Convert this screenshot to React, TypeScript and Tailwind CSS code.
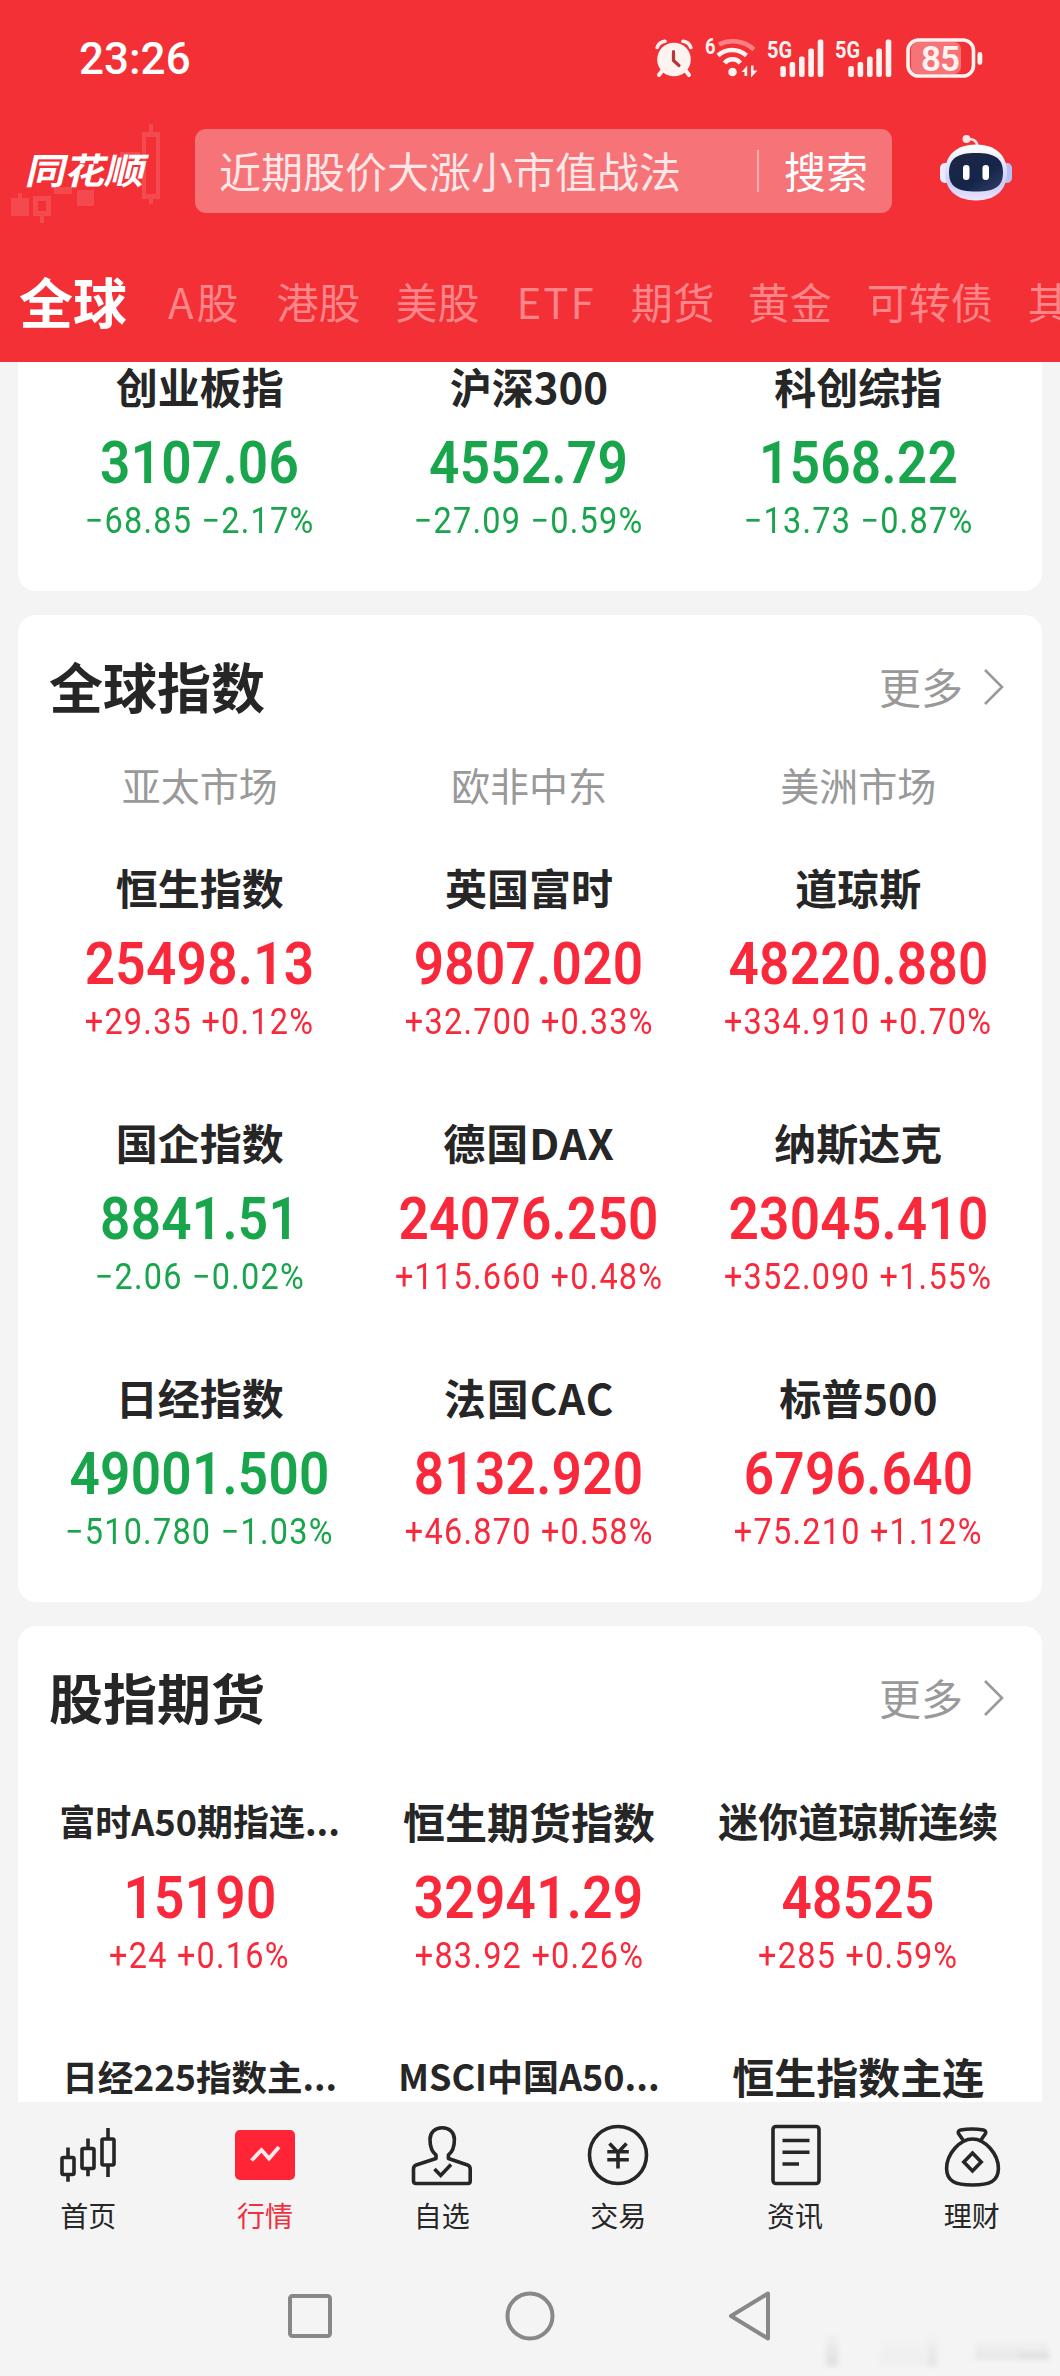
import React from 'react'

type Quote = {
  name: string
  value?: string
  change?: string
  percent?: string
  up?: boolean
  nameClass?: string
}

const cnIndexes: Quote[] = [
  { name: '创业板指', value: '3107.06', change: '−68.85', percent: '−2.17%' },
  { name: '沪深300', value: '4552.79', change: '−27.09', percent: '−0.59%' },
  { name: '科创综指', value: '1568.22', change: '−13.73', percent: '−0.87%' },
]

const globalIndexes: Quote[] = [
  { name: '恒生指数', value: '25498.13', change: '+29.35', percent: '+0.12%', up: true },
  { name: '英国富时', value: '9807.020', change: '+32.700', percent: '+0.33%', up: true },
  { name: '道琼斯', value: '48220.880', change: '+334.910', percent: '+0.70%', up: true },
  { name: '国企指数', value: '8841.51', change: '−2.06', percent: '−0.02%' },
  { name: '德国DAX', value: '24076.250', change: '+115.660', percent: '+0.48%', up: true, nameClass: 'text-[42px] tracking-[1px]' },
  { name: '纳斯达克', value: '23045.410', change: '+352.090', percent: '+1.55%', up: true },
  { name: '日经指数', value: '49001.500', change: '−510.780', percent: '−1.03%' },
  { name: '法国CAC', value: '8132.920', change: '+46.870', percent: '+0.58%', up: true, nameClass: 'text-[42px] tracking-[1px]' },
  { name: '标普500', value: '6796.640', change: '+75.210', percent: '+1.12%', up: true },
]

const futures: Quote[] = [
  { name: '富时A50期指连...', value: '15190', change: '+24', percent: '+0.16%', up: true, nameClass: 'text-[36px]' },
  { name: '恒生期货指数', value: '32941.29', change: '+83.92', percent: '+0.26%', up: true },
  { name: '迷你道琼斯连续', value: '48525', change: '+285', percent: '+0.59%', up: true, nameClass: 'text-[40px]' },
  { name: '日经225指数主...', nameClass: 'text-[35.5px]' },
  { name: 'MSCI中国A50...', nameClass: 'text-[36px]' },
  { name: '恒生指数主连' },
]

const regions = ['亚太市场', '欧非中东', '美洲市场']

const tabs = [
  { label: 'A股', className: 'tracking-[3px]' },
  { label: '港股' },
  { label: '美股' },
  { label: 'ETF', className: 'pl-0.5 tracking-[2px]' },
  { label: '期货' },
  { label: '黄金', className: '-ml-0.5' },
  { label: '可转债' },
  { label: '其' },
]

function AlarmIcon() {
  return (
    <svg width="38" height="38" viewBox="0 0 38 38" fill="none" className="shrink-0">
      <circle cx="19" cy="20.5" r="16.8" fill="#fff3f1" />
      <path d="M2.2 8.5Q4 3 10 2.3M35.800 8.500Q34 3 28 2.300" stroke="#fff3f1" strokeWidth="3.600" strokeLinecap="round" />
      <path d="M7 32l-3 4M31 32l3 4" stroke="#fff3f1" strokeWidth="4" strokeLinecap="round" />
      <path d="M18.500 12.500v9l5.500 5" stroke="#b6393a" strokeWidth="3.200" strokeLinecap="round" />
    </svg>
  )
}

function WifiIcon() {
  return (
    <svg width="52" height="40" viewBox="0 0 52 40" fill="none" className="shrink-0 overflow-visible font-['Roboto',sans-serif]">
      <text x="0" y="16" fill="#fff3f1" fontSize="22" fontWeight="700" textLength="10.500" lengthAdjust="spacingAndGlyphs">6</text>
      <path d="M14 6.500C25 1 39 2.500 49 11.500" stroke="#ff8084" strokeWidth="4.500" />
      <path d="M13 17.500C21 10 33 10 41.500 17.500" stroke="#fff3f1" strokeWidth="4.500" />
      <path d="M19.500 25C24 20 31 20 35.500 25" stroke="#fff3f1" strokeWidth="4.500" />
      <circle cx="27.500" cy="34" r="4.300" fill="#fff3f1" />
      <path d="M36.500 34l5.700-6.500v10.500h-2.700v-4zM52.500 32.500l-6.500 7V27.500h2.500v5z" fill="#fff3f1" />
    </svg>
  )
}

function SignalIcon() {
  return (
    <svg width="57" height="40" viewBox="0 0 57 40" className="shrink-0 overflow-visible font-['Roboto',sans-serif]">
      <text x="0" y="19.500" fill="#fff3f1" fontSize="24.500" fontWeight="700" textLength="25" lengthAdjust="spacingAndGlyphs">5G</text>
      <g fill="#fff3f1">
        <rect x="13.300" y="28" width="5.600" height="11" rx="2" />
        <rect x="22.600" y="24" width="5.600" height="15" rx="2" />
        <rect x="32" y="18.500" width="5.600" height="20.500" rx="2" />
        <rect x="41.300" y="10.500" width="5.600" height="28.500" rx="2" />
        <rect x="50.700" y="1.500" width="5.600" height="37.500" rx="2" />
      </g>
    </svg>
  )
}

function BatteryIcon() {
  return (
    <svg width="77" height="40" viewBox="0 0 77 40" fill="none" className="shrink-0 overflow-visible font-['Roboto',sans-serif]">
      <rect x="5" y="4" width="50" height="32" rx="7" fill="#f67478" />
      <rect x="2" y="2" width="65.500" height="36" rx="10.500" stroke="#fff3f1" strokeWidth="3.600" />
      <rect x="71.500" y="14" width="4.800" height="13" rx="2.400" fill="#fff3f1" />
      <text x="15" y="32.500" fill="#fff3f1" fontSize="35" fontWeight="600" textLength="39">85</text>
    </svg>
  )
}

function Logo() {
  return (
    <div className="relative h-[104px] w-[195px] shrink-0">
      <svg width="166" height="104" viewBox="0 0 166 104" fill="none" className="absolute top-[3px] left-0">
        <g fill="#f4494e">
          <path d="M11 76h7v-5h4v5h7v18H11zM77 68h17v16H77zM54 65h18v7H54zM120 30h20v8h-20z" />
          <path d="M33 74h18v20h-7v7h-4v-7h-7zm5 5v10h8V79z" fillRule="evenodd" />
          <path d="M142 10h7V2h4v8h7v67h-7v5h-4v-5h-7zm4 5v57h10V15z" fillRule="evenodd" />
        </g>
      </svg>
      <span className="absolute top-5 left-[28px] -skew-x-12 scale-y-90 text-[40px] leading-[60px] font-bold tracking-[-0.5px] whitespace-nowrap text-white">同花顺</span>
    </div>
  )
}

function Robot() {
  return (
    <svg width="76" height="72" viewBox="0 0 76 72" fill="none" className="shrink-0">
      <defs>
        <linearGradient id="shell" x1="0" y1="0" x2="0" y2="1">
          <stop offset="0" stopColor="#fff" />
          <stop offset="0.7" stopColor="#c9cdf8" />
          <stop offset="1" stopColor="#ece5fa" />
        </linearGradient>
        <linearGradient id="visor" x1="0" y1="0" x2="1" y2="1">
          <stop offset="0" stopColor="#1c2743" />
          <stop offset="0.6" stopColor="#15254a" />
          <stop offset="1" stopColor="#33406a" />
        </linearGradient>
      </defs>
      <path d="M29 7.500c6-1 10 1 10.500 7" stroke="#ffdfe2" strokeWidth="2.600" />
      <circle cx="28.500" cy="7" r="4" fill="#ffe3e6" />
      <rect x="2" y="31" width="10" height="20" rx="5" fill="#eceaff" />
      <rect x="64" y="31" width="10" height="20" rx="5" fill="#b9bff2" />
      <path d="M38 12.500c20 0 31 11 31 28S58 68.500 38 68.500 7 57.500 7 40.500 18 12.500 38 12.500z" fill="url(#shell)" />
      <path d="M38 21c19 0 27 5.500 27 19.500S57 59.500 38 59.500 11 54.500 11 40.500 19 21 38 21z" fill="url(#visor)" />
      <rect x="25" y="33" width="6.500" height="15" rx="3.200" fill="#fff" />
      <rect x="44.500" y="33" width="6.500" height="15" rx="3.200" fill="#fff" />
    </svg>
  )
}

function Chevron() {
  return (
    <svg width="22" height="38" viewBox="0 0 22 38" fill="none">
      <path d="M2 2l17 17L2 36" stroke="#999" strokeWidth="2.600" />
    </svg>
  )
}

function QuoteCell({ quote }: { quote: Quote }) {
  return (
    <div className={quote.up ? 'flex flex-col items-center text-[#f9283a]' : 'flex flex-col items-center text-[#18a54b]'}>
      <div className={`${quote.nameClass ?? 'text-[42px]'} h-[50px] leading-[47px] font-bold whitespace-nowrap text-[#262626]`}>{quote.name}</div>
      {quote.value ? (
        <>
          <div className="mt-[21px] h-[60px] scale-x-90 font-['Roboto',sans-serif] text-[59px] leading-[60px] font-semibold tracking-[0.3px] whitespace-nowrap">{quote.value}</div>
          <div className="mt-2 h-[39px] scale-x-90 font-['Roboto',sans-serif] text-[36px] leading-10 tracking-[1.4px] whitespace-nowrap">
            {quote.change} {quote.percent}
          </div>
        </>
      ) : null}
    </div>
  )
}

function SectionTitle({ title }: { title: string }) {
  return (
    <div className="flex h-[144px] items-center pr-[37px] pb-1 pl-[31px]">
      <h2 className="flex-1 text-[54px] font-bold text-[#262626]">{title}</h2>
      <span className="text-[42px] text-[#999]">更多</span>
      <span className="mt-1 ml-5">
        <Chevron />
      </span>
    </div>
  )
}

const icons = {
  home: (
    <g stroke="#262626" strokeWidth="3.600">
      <rect x="8" y="35.500" width="12" height="17" rx="1.500" />
      <rect x="28" y="26.500" width="12" height="20" rx="1.500" />
      <rect x="48" y="17" width="12" height="26" rx="1.500" />
      <path d="M14 25.500V35M14 53v6.700M34 16.500V26M34 47v7.300M54 6v10M54 43.500V55" />
    </g>
  ),
  market: (
    <g>
      <rect x="4" y="8" width="60" height="50" rx="5" fill="#ff2436" />
      <path d="M20.500 38.500L30.500 28l7.500 8.500L48 25" stroke="#ffe9ea" strokeWidth="3.800" />
    </g>
  ),
  watch: (
    <g stroke="#262626" strokeWidth="3.600">
      <path d="M28 36.500V33c-4-3-6-8-6-15.500C22 10.500 27 5.800 34.200 5.800S46.400 10.500 46.400 17.500c0 7.500-2 12.500-6 15.500v3.500L59.500 43q2.700 1 2.700 4v12q0 2.500-2.500 2.500H8q-2.500 0-2.500-2.500V47q0-3 2.700-4z" strokeLinejoin="round" />
      <path d="M26.500 47l6.200 6.500L43 42.500" />
    </g>
  ),
  trade: (
    <g stroke="#262626" strokeWidth="3.600">
      <circle cx="34" cy="33" r="28.500" />
      <path d="M25.500 21.500l8.500 9 8.500-9M34 30v16.500M23.300 29.800h21.500M23.300 37.800h21.500" />
    </g>
  ),
  news: (
    <g stroke="#262626" strokeWidth="3.600">
      <rect x="12" y="4.500" width="46" height="57" rx="3" />
      <path d="M21.500 18.500h27M21.500 30.300h27M21.500 42h16.500" />
    </g>
  ),
  wealth: (
    <g stroke="#262626" strokeWidth="3.600">
      <path d="M25 18L20.500 11.500q-1-2.500 2-3.500 11.500-2 23 0 3 1 2 3.500L43 18" strokeLinejoin="round" />
      <path d="M34.500 17C22 17 8.600 32 8.600 46.500 8.600 59 17 63 34.500 63S60.400 59 60.400 46.500C60.400 32 47 17 34.500 17z" />
      <path d="M34.500 31l8.700 9-8.700 9-8.700-9z" />
    </g>
  ),
}

const navItems = [
  { label: '首页', icon: icons.home },
  { label: '行情', icon: icons.market, active: true },
  { label: '自选', icon: icons.watch },
  { label: '交易', icon: icons.trade },
  { label: '资讯', icon: icons.news },
  { label: '理财', icon: icons.wealth },
]

export default function App() {
  return (
    <div className="relative h-[2376px] w-[1060px] overflow-hidden bg-[#f4f4f4] font-['Noto_Sans_CJK_SC',sans-serif]">
      <header className="h-[362px] overflow-hidden bg-[#f23035] text-white">
        <div className="flex h-[116px] items-center pr-[77px] pl-[79px]">
          <span className="flex-1 pt-0.5 font-['Roboto',sans-serif] text-[44px] font-medium">23:26</span>
          <div className="flex items-center">
            <AlarmIcon />
            <div className="ml-3 flex">
              <WifiIcon />
            </div>
            <div className="ml-2.5 flex gap-[11px]">
              <SignalIcon />
              <SignalIcon />
            </div>
            <div className="ml-3.5 flex">
              <BatteryIcon />
            </div>
          </div>
        </div>

        <div className="flex h-[110px] items-center">
          <Logo />
          <div className="flex h-[84px] w-[697px] items-center rounded-[11px] bg-[#f67478] pr-6 pb-1 pl-6">
            <span className="flex-1 text-[42px] text-[#ffe6e7]">近期股价大涨小市值战法</span>
            <span className="mt-1 h-[42px] w-[2px] bg-[#f9b0b3]" />
            <span className="ml-[25px] text-[42px]">搜索</span>
          </div>
          <div className="ml-[46px] -translate-y-[3px]">
            <Robot />
          </div>
        </div>

        <nav className="flex h-[136px] items-center gap-[35px] pt-[13px] pl-[19px] text-[42px] whitespace-nowrap text-[#ff8589]">
          <span className="mr-1.5 text-[54px] font-bold text-white">全球</span>
          {tabs.map((tab) => (
            <span key={tab.label} className={tab.className}>{tab.label}</span>
          ))}
        </nav>
      </header>

      <main className="flex h-[1740px] flex-col gap-6 overflow-hidden px-[18px]">
        <section className="grid h-[229px] shrink-0 grid-cols-3 rounded-b-[18px] bg-white pr-[19px] pl-[17px]">
          {cnIndexes.map((quote) => (
            <QuoteCell key={quote.name} quote={quote} />
          ))}
        </section>

        <section className="shrink-0 rounded-[18px] bg-white pb-[51px]">
          <SectionTitle title="全球指数" />
          <div className="-mt-1 grid h-[58px] grid-cols-3 items-center pr-[19px] pb-1 pl-[17px] text-center text-[39px] text-[#999]">
            {regions.map((region) => (
              <span key={region}>{region}</span>
            ))}
          </div>
          <div className="mt-[50px] grid grid-cols-3 gap-y-[77px] pr-[19px] pl-[17px]">
            {globalIndexes.map((quote) => (
              <QuoteCell key={quote.name} quote={quote} />
            ))}
          </div>
        </section>

        <section className="shrink-0 rounded-t-[18px] bg-white">
          <SectionTitle title="股指期货" />
          <div className="mt-[27px] grid grid-cols-3 gap-y-[77px] pr-[19px] pl-[17px]">
            {futures.map((quote) => (
              <QuoteCell key={quote.name} quote={quote} />
            ))}
          </div>
        </section>
      </main>

      <nav className="grid h-[150px] grid-cols-6 pt-5">
        {navItems.map((item) => (
          <div key={item.label} className="flex flex-col items-center">
            <svg width="68" height="68" viewBox="0 0 68 68" fill="none">
              {item.icon}
            </svg>
            <span className={item.active ? 'mt-[5px] text-[28px] leading-10 text-[#f0303f]' : 'mt-[5px] text-[28px] leading-10 text-[#262626]'}>{item.label}</span>
          </div>
        ))}
      </nav>

      <div className="flex h-[124px] items-center justify-center gap-[170px] pt-1">
        <svg width="50" height="54" viewBox="0 0 50 54" fill="none" stroke="#888" strokeWidth="4">
          <rect x="5" y="7" width="40" height="40" rx="2.500" />
        </svg>
        <svg width="50" height="54" viewBox="0 0 50 54" fill="none" stroke="#888" strokeWidth="4">
          <circle cx="25" cy="27" r="22.500" />
        </svg>
        <svg width="50" height="54" viewBox="0 0 50 54" fill="none" stroke="#888" strokeWidth="4" strokeLinejoin="round">
          <path d="M6 27L43 4.500v45z" />
        </svg>
      </div>

      <svg width="240" height="50" viewBox="0 0 240 50" className="absolute right-0 bottom-0">
        <defs>
          <linearGradient id="smudge" x1="0" y1="0" x2="0" y2="1">
            <stop offset="0" stopColor="#bbb" stopOpacity="0" />
            <stop offset="1" stopColor="#bbb" stopOpacity="0.4" />
          </linearGradient>
          <filter id="soft">
            <feGaussianBlur stdDeviation="2.500" />
          </filter>
        </defs>
        <g filter="url(#soft)" fill="url(#smudge)">
          <rect x="6" y="6" width="12" height="34" />
          <rect x="60" y="6" width="60" height="34" opacity="0.25" />
          <rect x="108" y="6" width="8" height="34" opacity="0.500" />
          <rect x="155" y="12" width="74" height="22" opacity="0.600" />
          <rect x="200" y="24" width="30" height="8" opacity="0.700" />
        </g>
      </svg>
    </div>
  )
}
